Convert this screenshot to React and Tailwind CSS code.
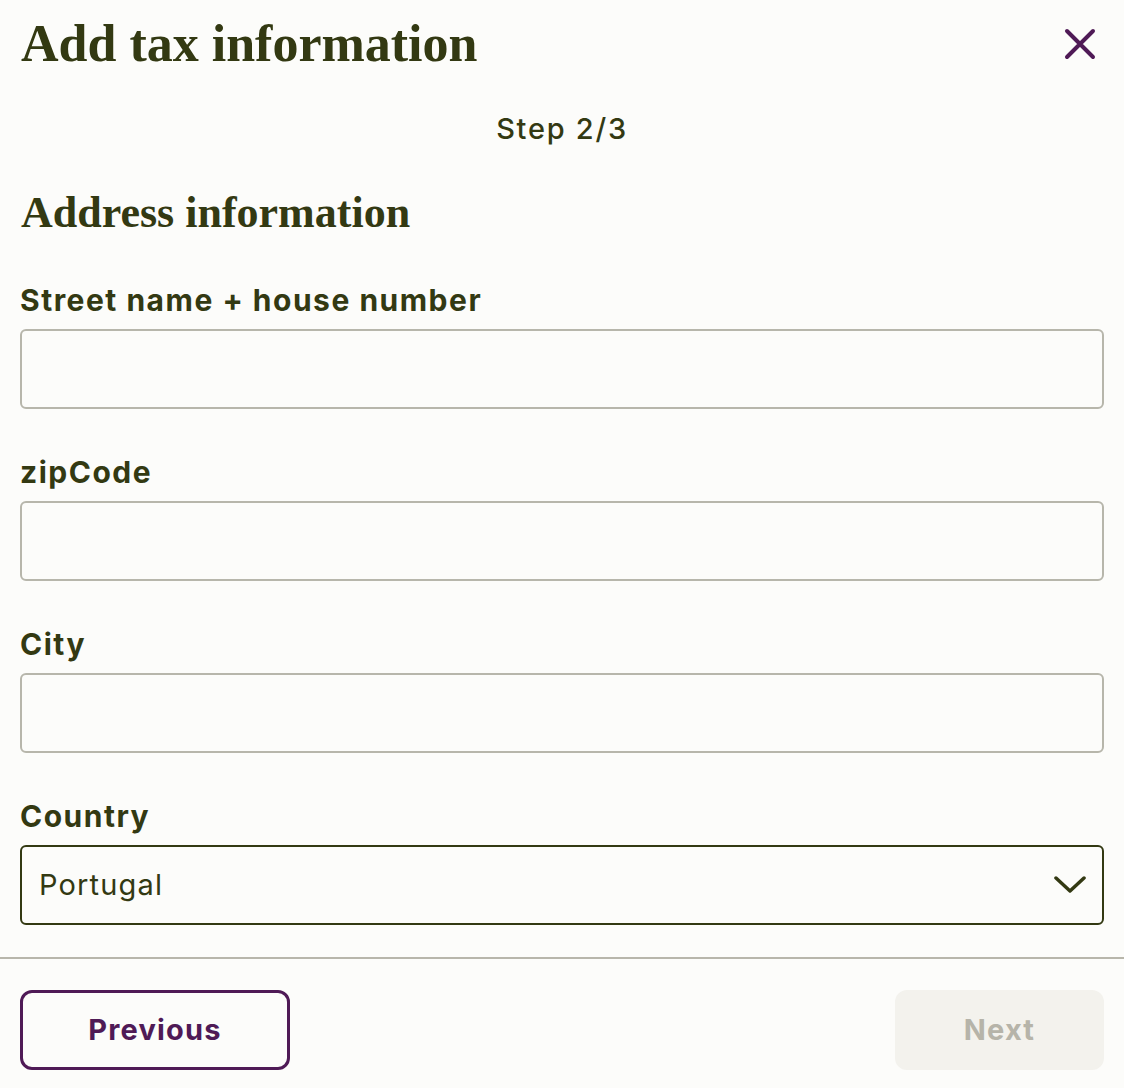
import React from 'react';

const sans = { fontFamily: 'Inter, "Open Sans", sans-serif' };
const serif = { fontFamily: '"Liberation Serif", serif' };

// --- Text input with label ---
function Field({ label, children }) {
  return (
    <div className="mt-[45px] first:mt-[43px]">
      <label className="block text-[30px] leading-[36px] font-bold tracking-[0.05em] text-[#333912]">{label}</label>
      <div className="mt-[11px]">{children}</div>
    </div>
  );
}

function TextInput() {
  return (
    <input
      type="text"
      className="block w-full h-[80px] rounded-[6px] border-2 border-[#b7b6ab] bg-transparent px-[18px] text-[29px] tracking-[0.04em] text-[#333912] outline-none"
    />
  );
}

export default function App() {
  return (
    <div className="min-h-screen bg-[#fcfcfa] text-[#333912]" style={sans}>
      {/* --- Header --- */}
      <div className="flex items-center justify-between h-[88px] pl-[21px] pr-[28px]">
        <h1 className="text-[52px] leading-[56px] font-bold text-[#333912]" style={serif}>
          Add tax information
        </h1>
        <button className="w-[32px] h-[32px] flex items-center justify-center text-[#4f1a56]">
          <svg width="32" height="32" viewBox="0 0 32 32" fill="none" stroke="currentColor" strokeWidth="4" strokeLinecap="round">
            <path d="M3 3 L29 29 M29 3 L3 29" />
          </svg>
        </button>
      </div>

      <div className="mt-[23px] text-center text-[29px] leading-[36px] font-medium tracking-[0.06em]">Step 2/3</div>

      {/* --- Form --- */}
      <div className="px-[20px]">
        <h2 className="mt-[42px] pl-[1px] text-[44px] leading-[48px] font-bold" style={serif}>
          Address information
        </h2>

        <Field label="Street name + house number"><TextInput /></Field>
        <Field label="zipCode"><TextInput /></Field>
        <Field label="City"><TextInput /></Field>
        <Field label="Country">
          <div className="relative">
            <select className="block w-full h-[80px] appearance-none rounded-[6px] border-2 border-[#333912] bg-transparent pl-[17px] text-[29px] tracking-[0.04em] text-[#333912] outline-none">
              <option>Portugal</option>
            </select>
            <svg className="pointer-events-none absolute right-[18px] top-1/2 -translate-y-1/2" width="32" height="18" viewBox="0 0 32 18" fill="none" stroke="#333912" strokeWidth="3.5" strokeLinecap="round" strokeLinejoin="round">
              <path d="M2 2 L16 15 L30 2" />
            </svg>
          </div>
        </Field>
      </div>

      {/* --- Footer --- */}
      <div className="mt-[32px] border-t-2 border-[#b8b6ab]" />
      <div className="flex items-center justify-between px-[20px] pt-[31px] pb-[18px]">
        <button className="w-[270px] h-[80px] rounded-[12px] border-[3px] border-[#4f1a56] text-[29px] font-bold tracking-[0.04em] text-[#4f1a56]">
          Previous
        </button>
        <button disabled className="w-[209px] h-[80px] rounded-[12px] bg-[#f3f2ed] text-[29px] font-bold tracking-[0.04em] text-[#b6b4a9]">
          Next
        </button>
      </div>
    </div>
  );
}
